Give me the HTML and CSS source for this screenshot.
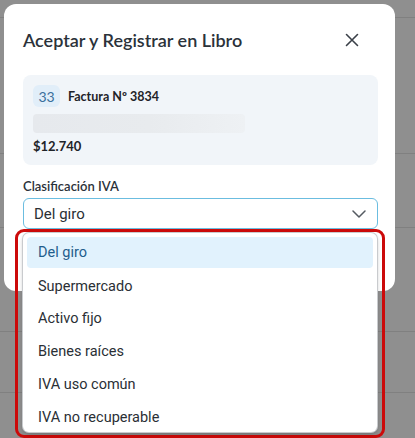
FILE: index.html
```html
<!DOCTYPE html>
<html lang="es">
<head>
<meta charset="utf-8">
<title>Aceptar y Registrar en Libro</title>
<link rel="stylesheet" href="styles.css">
</head>
<body>
<div class="page">
  <div class="page-row r1"></div>
  <div class="page-row r2"></div>
  <div class="page-row r3"></div>
  <div class="page-row r4"></div>
  <div class="page-row r5"></div>
</div>

<div class="modal">
  <div class="modal-head">
    <h2 class="modal-title">Aceptar y Registrar en Libro</h2>
    <button class="close-btn" aria-label="Cerrar">
      <svg width="14" height="14" viewBox="0 0 14 14"><path d="M1.5 1.5 L12.5 12.5 M12.5 1.5 L1.5 12.5" stroke="#3a4048" stroke-width="1.6" stroke-linecap="round" fill="none"/></svg>
    </button>
  </div>

  <div class="doc-card">
    <div class="doc-top">
      <span class="doc-badge">33</span>
      <span class="doc-name">Factura Nº 3834</span>
    </div>
    <div class="doc-blur"></div>
    <div class="doc-amount">$12.740</div>
  </div>

  <div class="field-label">Clasificación IVA</div>
  <div class="select">
    <span>Del giro</span>
    <svg width="14" height="8" viewBox="0 0 14 8"><path d="M1 1 L7 7 L13 1" stroke="#555b62" stroke-width="1.5" fill="none" stroke-linecap="round" stroke-linejoin="round"/></svg>
  </div>
</div>

<div class="highlight">
  <ul class="listbox">
    <li class="option selected">Del giro</li>
    <li class="option">Supermercado</li>
    <li class="option">Activo fijo</li>
    <li class="option">Bienes raíces</li>
    <li class="option">IVA uso común</li>
    <li class="option">IVA no recuperable</li>
  </ul>
</div>
</body>
</html>
```

FILE: styles.css
```css
html, body {
  margin: 0;
  padding: 0;
}
body {
  width: 415px;
  height: 438px;
  overflow: hidden;
  background: #8f8f8f;
  font-family: "Lato", "Liberation Sans", sans-serif;
  position: relative;
}
.page {
  height: 438px;
}
.page-row {
  border-bottom: 1px solid #808080;
}
.r1 { height: 17px; }
.r2 { height: 135px; }
.r3 { height: 73px; }
.r4 { height: 103px; }
.r5 { height: 60px; }

.modal {
  position: absolute;
  left: 4px;
  top: 4px;
  width: 391px;
  height: 287px;
  background: #ffffff;
  border-radius: 12px;
  box-sizing: border-box;
  padding: 0 17px 0 19px;
}
.modal-head {
  display: flex;
  align-items: center;
  justify-content: space-between;
  height: 71px;
}
.modal-title {
  margin: 0;
  font-family: "Lato", sans-serif;
  font-weight: 600;
  font-size: 18px;
  color: #2b323a;
  padding-top: 1px;
}
.close-btn {
  border: 0;
  background: none;
  padding: 0;
  width: 20px;
  height: 20px;
  display: flex;
  align-items: center;
  justify-content: center;
  margin-right: 16px;
}
.doc-card {
  background: #f1f5f9;
  border-radius: 8px;
  height: 90px;
  box-sizing: border-box;
  padding: 10px 10px 0 10px;
}
.doc-top {
  display: flex;
  align-items: center;
  gap: 8px;
  height: 22px;
}
.doc-badge {
  background: #e1eef9;
  color: #3a6f9c;
  font-family: "Lato", sans-serif;
  font-size: 14px;
  border-radius: 6px;
  width: 27px;
  height: 22px;
  display: flex;
  align-items: center;
  justify-content: center;
}
.doc-name {
  font-family: "Lato", sans-serif;
  font-weight: 700;
  font-size: 12.5px;
  color: #1e2328;
}
.doc-blur {
  margin-top: 7px;
  height: 19px;
  width: 212px;
  border-radius: 4px;
  background: linear-gradient(90deg, #e6e9ed 0%, #e8ebee 55%, #eef1f4 100%);
}
.doc-amount {
  margin-top: 5px;
  font-family: "Lato", sans-serif;
  font-weight: 700;
  font-size: 13px;
  color: #1e2328;
}
.field-label {
  margin-top: 13px;
  font-family: "Lato", sans-serif;
  font-weight: 600;
  font-size: 13px;
  color: #2b323a;
  height: 16px;
}
.select {
  margin-top: 4px;
  height: 31px;
  box-sizing: border-box;
  border: 1px solid #6bbde0;
  border-radius: 6px;
  display: flex;
  align-items: center;
  justify-content: space-between;
  padding: 0 11px 0 10px;
  font-family: "Roboto", "Liberation Sans", sans-serif;
  font-size: 15px;
  color: #2a2f35;
}

.highlight {
  position: absolute;
  left: 15px;
  top: 229px;
  width: 370px;
  height: 209px;
  box-sizing: border-box;
  border: 3px solid #cc0a0a;
  border-radius: 9px;
  padding: 1px 5px 0 5px;
}
.listbox {
  list-style: none;
  margin: 0;
  padding: 4px 4px 4px 4px;
  background: #ffffff;
  border-radius: 6px;
  box-shadow: 0 0 0 1px #c9cbce, 0 2px 4px rgba(0, 0, 0, 0.25);
  height: 199px;
  box-sizing: border-box;
}
.option {
  height: 32.8px;
  display: flex;
  align-items: center;
  padding-left: 11px;
  font-family: "Roboto", "Liberation Sans", sans-serif;
  font-size: 14.5px;
  color: #2a2f35;
  border-radius: 4px;
}
.option.selected {
  background: #e1f2fd;
  color: #1f5d8c;
  height: 31px;
  margin-bottom: 1.8px;
}
```
